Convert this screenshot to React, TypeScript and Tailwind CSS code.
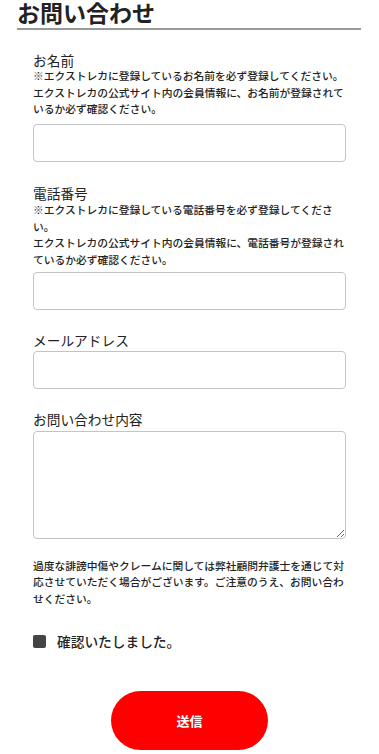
import React from 'react';

const fieldClass =
  'block w-full h-[38px] rounded-[4px] border border-[#c4c4c4] bg-white px-2 text-[14px] outline-none';

function Label({ children, className = '' }: { children: React.ReactNode; className?: string }) {
  return <div className={`text-[13.7px] leading-[16px] text-[#222] ${className}`}>{children}</div>;
}

function Note({ children, className = '' }: { children: React.ReactNode; className?: string }) {
  return <p className={`text-[10.75px] font-medium leading-[16.5px] text-[#222] ${className}`}>{children}</p>;
}

export default function App() {
  return (
    <div
      className="min-h-[754px] w-full bg-white"
      style={{ fontFamily: '"Noto Sans CJK JP", "Noto Sans", sans-serif' }}
    >
      <h2 className="mx-[17px] mr-[18px] border-b-2 border-[#999] pb-[4px] text-[23px] font-bold leading-[24px] text-[#222]">
        お問い合わせ
      </h2>

      <form className="px-[33px] pt-[21.5px]" onSubmit={(e) => e.preventDefault()}>
        <Label>お名前</Label>
        <Note className="mt-[0.75px]">
          ※エクストレカに登録しているお名前を必ず登録してください。
          <br />
          エクストレカの公式サイト内の会員情報に、お名前が登録されているか必ず確認ください。
        </Note>
        <input type="text" className={`${fieldClass} mt-[6px]`} />

        <Label className="mt-[23px]">電話番号</Label>
        <Note className="mt-[1.25px]">
          ※エクストレカに登録している電話番号を必ず登録してください。
          <br />
          エクストレカの公式サイト内の会員情報に、電話番号が登録されているか必ず確認ください。
        </Note>
        <input type="tel" className={`${fieldClass} mt-[4px]`} />

        <Label className="mt-[22px]">メールアドレス</Label>
        <input type="email" className={`${fieldClass} mt-[3px]`} />

        <Label className="mt-[22px]">お問い合わせ内容</Label>
        <textarea className="mt-[4px] block h-[108px] w-full resize-y rounded-[4px] border border-[#c4c4c4] bg-white p-2 text-[14px] outline-none" />

        <Note className="mt-[18.75px]">
          過度な誹謗中傷やクレームに関しては弊社顧問弁護士を通じて対応させていただく場合がございます。ご注意のうえ、お問い合わせください。
        </Note>

        <label className="mt-[24px] flex h-[20px] items-center gap-[11px]">
          <span className="block h-[13px] w-[13px] rounded-[2px] bg-[#444]" />
          <span className="text-[13.7px] font-medium text-[#222]">確認いたしました。</span>
        </label>

        <div className="mt-[40px] flex justify-center">
          <button
            type="submit"
            className="h-[59px] w-[157px] rounded-full bg-[#ff0000] text-[13px] font-bold text-white"
          >
            送信
          </button>
        </div>
      </form>
    </div>
  );
}
